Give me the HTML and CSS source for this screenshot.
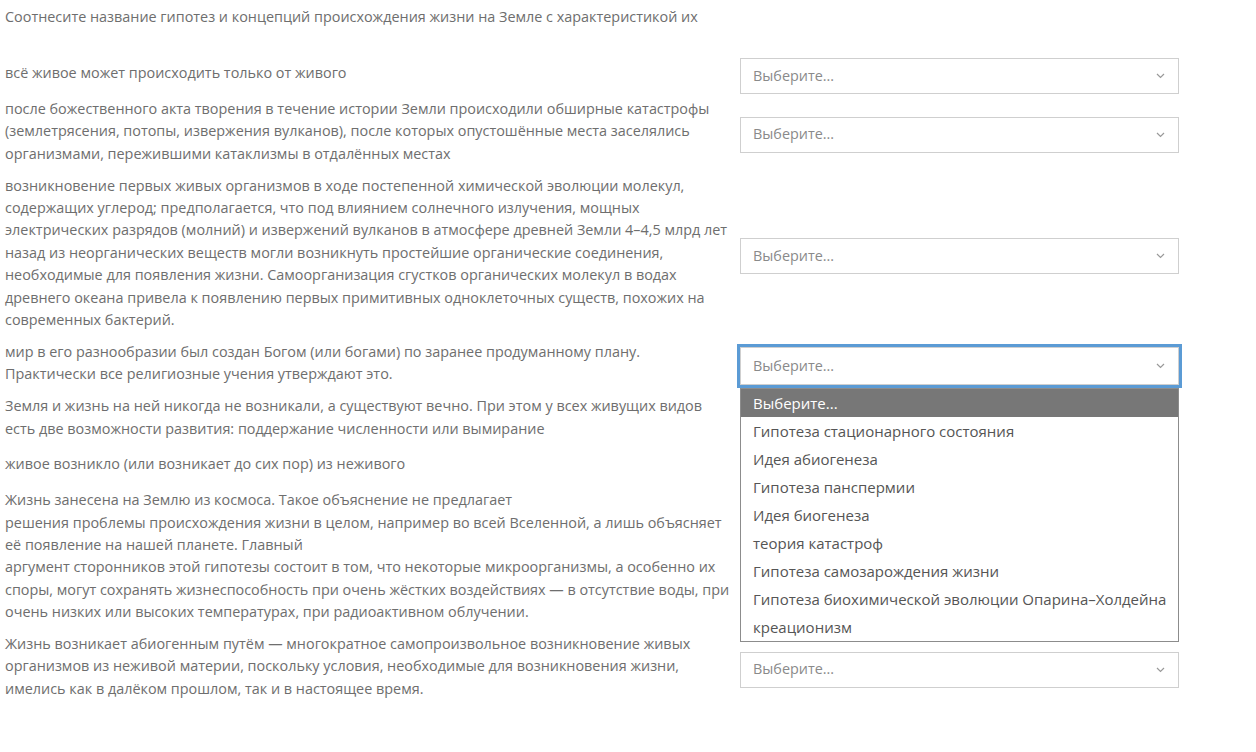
FILE: index.html
```html
<!DOCTYPE html>
<html lang="ru">
<head>
    <meta charset="UTF-8">
    <title>Соотнесите гипотезы</title>
    <link rel="stylesheet" href="styles.css">
</head>
<body>
    <p class="title">Соотнесите название гипотез и концепций происхождения жизни на Земле с характеристикой их</p>

    <div class="match">
        <div class="row">
            <p class="row-text">всё живое может происходить только от живого</p>
            <div class="select"><span>Выберите...</span><svg class="chevron" width="9" height="6" viewBox="0 0 9 6"><polyline points="1,1 4.5,4.5 8,1"/></svg></div>
        </div>
        <div class="row">
            <p class="row-text">после божественного акта творения в течение истории Земли происходили обширные катастрофы (землетрясения, потопы, извержения вулканов), после которых опустошённые места заселялись организмами, пережившими катаклизмы в отдалённых местах</p>
            <div class="select"><span>Выберите...</span><svg class="chevron" width="9" height="6" viewBox="0 0 9 6"><polyline points="1,1 4.5,4.5 8,1"/></svg></div>
        </div>
        <div class="row">
            <p class="row-text">возникновение первых живых организмов в ходе постепенной химической эволюции молекул, содержащих углерод; предполагается, что под влиянием солнечного излучения, мощных электрических разрядов (молний) и извержений вулканов в атмосфере древней Земли 4–4,5 млрд лет назад из неорганических веществ могли возникнуть простейшие органические соединения, необходимые для появления жизни. Самоорганизация сгустков органических молекул в водах древнего океана привела к появлению первых примитивных одноклеточных существ, похожих на современных бактерий.</p>
            <div class="select"><span>Выберите...</span><svg class="chevron" width="9" height="6" viewBox="0 0 9 6"><polyline points="1,1 4.5,4.5 8,1"/></svg></div>
        </div>
        <div class="row">
            <p class="row-text">мир в его разнообразии был создан Богом (или богами) по заранее продуманному плану. Практически все религиозные учения утверждают это.</p>
            <div class="select open">
                <span>Выберите...</span><svg class="chevron" width="9" height="6" viewBox="0 0 9 6"><polyline points="1,1 4.5,4.5 8,1"/></svg>
                <ul class="options">
                    <li class="active">Выберите...</li>
                    <li>Гипотеза стационарного состояния</li>
                    <li>Идея абиогенеза</li>
                    <li>Гипотеза панспермии</li>
                    <li>Идея биогенеза</li>
                    <li>теория катастроф</li>
                    <li>Гипотеза самозарождения жизни</li>
                    <li>Гипотеза биохимической эволюции Опарина–Холдейна</li>
                    <li>креационизм</li>
                </ul>
            </div>
        </div>
        <div class="row">
            <p class="row-text">Земля и жизнь на ней никогда не возникали, а существуют вечно. При этом у всех живущих видов есть две возможности развития: поддержание численности или вымирание</p>
            <div class="select"><span>Выберите...</span><svg class="chevron" width="9" height="6" viewBox="0 0 9 6"><polyline points="1,1 4.5,4.5 8,1"/></svg></div>
        </div>
        <div class="row">
            <p class="row-text">живое возникло (или возникает до сих пор) из неживого</p>
            <div class="select"><span>Выберите...</span><svg class="chevron" width="9" height="6" viewBox="0 0 9 6"><polyline points="1,1 4.5,4.5 8,1"/></svg></div>
        </div>
        <div class="row">
            <p class="row-text">Жизнь занесена на Землю из космоса. Такое объяснение не предлагает<br>решения проблемы происхождения жизни в целом, например во всей Вселенной, а лишь объясняет её появление на нашей планете. Главный<br>аргумент сторонников этой гипотезы состоит в том, что некоторые микроорганизмы, а особенно их споры, могут сохранять жизнеспособность при очень жёстких воздействиях — в отсутствие воды, при очень низких или высоких температурах, при радиоактивном облучении.</p>
            <div class="select"><span>Выберите...</span><svg class="chevron" width="9" height="6" viewBox="0 0 9 6"><polyline points="1,1 4.5,4.5 8,1"/></svg></div>
        </div>
        <div class="row">
            <p class="row-text">Жизнь возникает абиогенным путём — многократное самопроизвольное возникновение живых организмов из неживой материи, поскольку условия, необходимые для возникновения жизни, имелись как в далёком прошлом, так и в настоящее время.</p>
            <div class="select"><span>Выберите...</span><svg class="chevron" width="9" height="6" viewBox="0 0 9 6"><polyline points="1,1 4.5,4.5 8,1"/></svg></div>
        </div>
    </div>
</body>
</html>
```

FILE: styles.css
```css
body {
    font-family: "Open Sans", Arial, sans-serif;
    font-size: 14.4px;
    line-height: 22.4px;
    color: #6e6e6e;
    background: #fff;
    margin: 0;
    padding: 6px 5px;
}
p {
    margin: 0;
}
.title {
    margin-bottom: 30px;
}
.row {
    display: flex;
    align-items: center;
    margin-bottom: 3.5px;
}
.row-text {
    flex: none;
    width: 727px;
    margin-bottom: 6px;
}
.select {
    position: relative;
    box-sizing: border-box;
    flex: none;
    width: 439px;
    height: 36px;
    margin-left: 8px;
    padding: 0 12px;
    border: 1px solid #cfcfcf;
    display: flex;
    align-items: center;
    justify-content: space-between;
    color: #8a8a8a;
    background: #fff;
}
.chevron {
    fill: none;
    stroke: #999;
    stroke-width: 1.2;
    margin-right: 1px;
}
.select.open {
    height: 38px;
    outline: 3px solid #5b9bd5;
}
.options {
    position: absolute;
    top: calc(100% + 4px);
    left: -1px;
    right: -1px;
    margin: 0;
    padding: 0;
    list-style: none;
    background: #fff;
    border: 1px solid #8c8c8c;
    z-index: 10;
}
.options li {
    height: 28px;
    line-height: 28px;
    padding: 0 12px;
    font-size: 15px;
    color: #555;
    white-space: nowrap;
}
.options li.active {
    background: #777;
    color: #fff;
}
```
